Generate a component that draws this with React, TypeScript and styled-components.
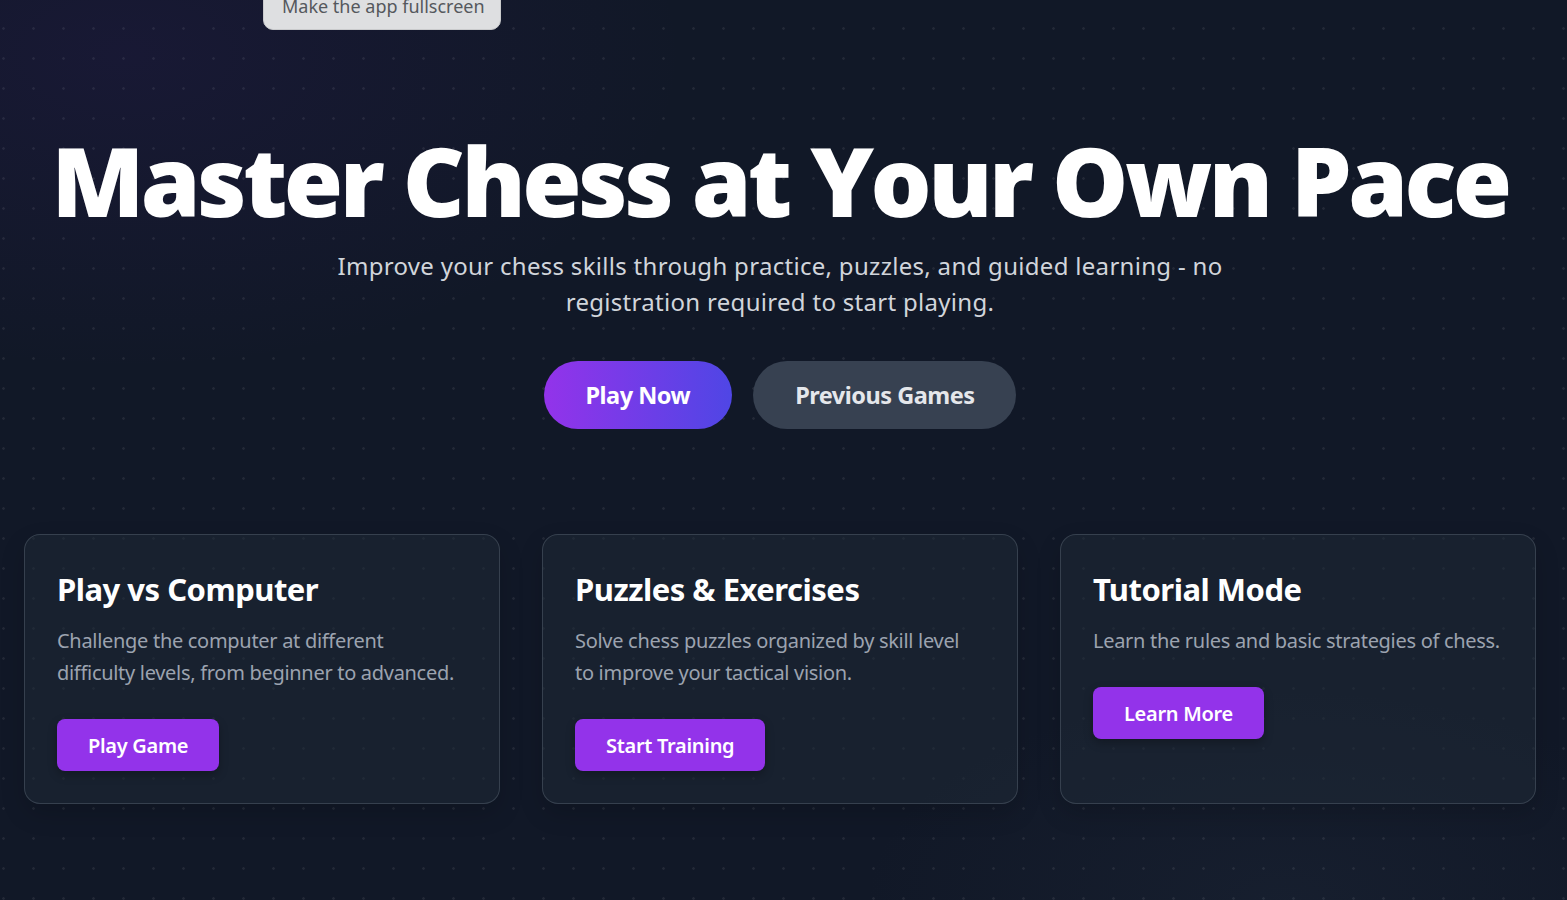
import React from "react";
import styled, { createGlobalStyle } from "styled-components";

const GlobalStyle = createGlobalStyle`
  html, body {
    margin: 0;
    padding: 0;
    background: #111827;
  }
  body {
    font-family: "Noto Sans", "Open Sans", sans-serif;
    -webkit-font-smoothing: antialiased;
  }
  * { box-sizing: border-box; }
`;

const Page = styled.div`
  position: relative;
  width: 1567px;
  height: 900px;
  overflow: hidden;
  background-color: #111827;
  background-image:
    radial-gradient(circle at 1.5px 1.5px, rgba(255, 255, 255, 0.07) 1px, transparent 1.6px),
    radial-gradient(ellipse 800px 450px at 8% 6%, rgba(76, 29, 149, 0.12), transparent 70%),
    radial-gradient(ellipse 600px 300px at 82% 100%, rgba(51, 65, 85, 0.16), transparent 70%);
  background-size: 30px 30px, 100% 100%, 100% 100%;
  background-position: 2px 27px, 0 0, 0 0;
`;

const Content = styled.main`
  width: 1560px;
  padding: 132px 24px 0;
  display: flex;
  flex-direction: column;
  align-items: center;
`;

const Title = styled.h1`
  margin: 0;
  font-family: "Open Sans", "Noto Sans", sans-serif;
  font-size: 96px;
  line-height: 1;
  font-weight: 800;
  color: #ffffff;
  letter-spacing: -3.5px;
  white-space: nowrap;
`;

const Subtitle = styled.p`
  margin: 20px 0 0;
  width: 900px;
  text-align: center;
  font-size: 24px;
  line-height: 36px;
  letter-spacing: 0.3px;
  color: #d1d5db;
`;

const HeroActions = styled.div`
  display: flex;
  gap: 21px;
  margin-top: 41px;
`;

const PillButton = styled.button<{ $variant: "primary" | "secondary" }>`
  border: none;
  border-radius: 9999px;
  height: 68px;
  padding: 0 42px;
  font-family: inherit;
  font-size: 23.5px;
  font-weight: 700;
  letter-spacing: -0.5px;
  cursor: pointer;
  color: ${(p) => (p.$variant === "primary" ? "#ffffff" : "#e5e7eb")};
  background: ${(p) =>
    p.$variant === "primary"
      ? "linear-gradient(90deg, #9333ea 0%, #4f46e5 100%)"
      : "#374151"};
`;

const CardGrid = styled.section`
  align-self: stretch;
  display: grid;
  grid-template-columns: repeat(3, 476px);
  gap: 42px;
  margin-top: 105px;
`;

const Card = styled.article`
  border: 1px solid rgba(75, 85, 99, 0.6);
  border-radius: 16px;
  background: rgba(31, 41, 55, 0.55);
  padding: 34px 32px 32px;
  display: flex;
  flex-direction: column;
  align-items: flex-start;
  box-shadow: 0 10px 25px rgba(0, 0, 0, 0.15);
`;

const CardTitle = styled.h2`
  margin: 0;
  font-size: 31px;
  line-height: 40px;
  font-weight: 700;
  color: #ffffff;
  letter-spacing: -0.5px;
`;

const CardText = styled.p`
  margin: 16px 0 0;
  font-size: 20px;
  line-height: 32px;
  letter-spacing: -0.3px;
  color: #9ca3af;
`;

const CardButton = styled.button`
  margin-top: 30px;
  height: 52px;
  padding: 0 31px;
  border: none;
  border-radius: 8px;
  background: #9333ea;
  color: #ffffff;
  font-family: inherit;
  font-size: 20px;
  font-weight: 600;
  letter-spacing: -0.3px;
  cursor: pointer;
  box-shadow: 0 4px 10px rgba(0, 0, 0, 0.25);
`;

const Tooltip = styled.div`
  position: absolute;
  left: 263px;
  top: -10px;
  width: 238px;
  height: 40px;
  border-radius: 10px;
  background: #dedfe1;
  border: 1px solid #c9cacc;
  color: #55585d;
  font-size: 18px;
  line-height: 20px;
  padding: 5px 0 0 18px;
  white-space: nowrap;
`;

const cards = [
  {
    title: "Play vs Computer",
    text: "Challenge the computer at different difficulty\u00A0levels, from beginner to advanced.",
    action: "Play Game",
  },
  {
    title: "Puzzles & Exercises",
    text: "Solve chess puzzles organized by skill level to\u00A0improve your tactical vision.",
    action: "Start Training",
  },
  {
    title: "Tutorial Mode",
    text: "Learn the rules and basic strategies of chess.",
    action: "Learn More",
  },
];

export default function App() {
  return (
    <>
      <GlobalStyle />
      <Page>
        <Content>
          <Title>Master Chess at Your Own Pace</Title>
          <Subtitle>
            Improve your chess skills through practice, puzzles, and guided learning - no
            registration required to start playing.
          </Subtitle>
          <HeroActions>
            <PillButton $variant="primary">Play Now</PillButton>
            <PillButton $variant="secondary">Previous Games</PillButton>
          </HeroActions>
          <CardGrid>
            {cards.map((c) => (
              <Card key={c.title}>
                <CardTitle>{c.title}</CardTitle>
                <CardText>{c.text}</CardText>
                <CardButton>{c.action}</CardButton>
              </Card>
            ))}
          </CardGrid>
        </Content>
        <Tooltip>Make the app fullscreen</Tooltip>
      </Page>
    </>
  );
}
